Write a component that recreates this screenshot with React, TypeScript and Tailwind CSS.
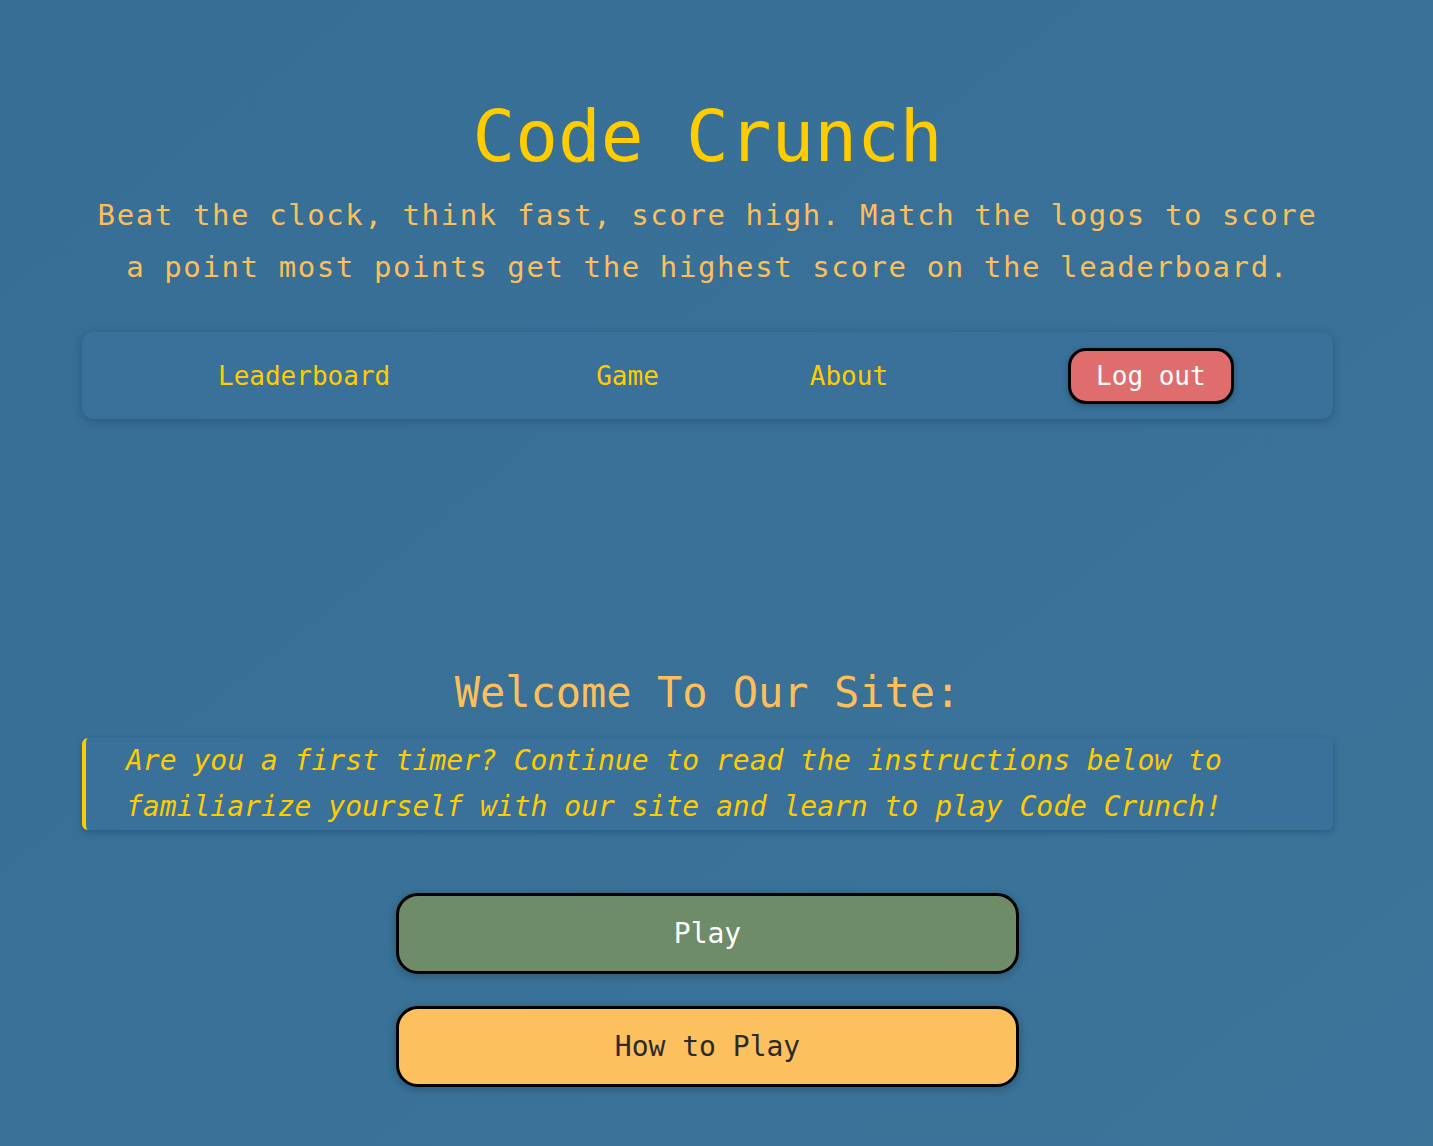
const mono = { fontFamily: '"DejaVu Sans Mono", "Liberation Mono", monospace' };

function NavLink({ children, className }: { children: React.ReactNode; className?: string }) {
  return (
    <a href="#" className={"text-[26px] leading-[32px] text-[#ffcc00] " + (className ?? "")}>
      {children}
    </a>
  );
}

export default function App() {
  return (
    <div
      style={mono}
      className="min-h-[1146px] w-full bg-gradient-to-br from-[#366e96] to-[#3b7399] pb-[60px] pl-[82px] pr-[100px]"
    >
      <header className="flex flex-col items-center text-center">
        <h1 className="mt-[95px] text-[71px] leading-[84px] text-[#ffcc00]">Code Crunch</h1>
        <p className="mt-[10px] text-[29px] leading-[52px] tracking-[1.6px] text-[#fcbf5b]">
          Beat the clock, think fast, score high. Match the logos to score
          <br />
          a point most points get the highest score on the leaderboard.
        </p>
      </header>

      <nav className="mt-[39px] flex h-[87px] items-center rounded-xl bg-[#39719a] pl-[136px] shadow-[0_2px_8px_rgba(20,50,80,0.35)]">
        <NavLink>Leaderboard</NavLink>
        <NavLink className="ml-[206px]">Game</NavLink>
        <NavLink className="ml-[151px]">About</NavLink>
        <button className="ml-[180px] rounded-[18px] border-[3px] border-black bg-[#e06d6d] px-[25px] py-[9px] text-[26px] leading-[32px] text-white shadow-[0_2px_6px_rgba(0,0,0,0.25)]">
          Log out
        </button>
      </nav>

      <section className="mt-[249px] flex flex-col items-center">
        <h2 className="text-[42px] leading-[50px] text-[#fcbf5b]">Welcome To Our Site:</h2>
        <blockquote className="mt-[20px] w-full rounded-md border-l-4 border-[#ffcc00] bg-[#39719a] pl-[40px] text-[28px] italic leading-[46px] text-[#ffcc00] shadow-[0_2px_6px_rgba(20,50,80,0.35)]">
          Are you a first timer? Continue to read the instructions below to
          <br />
          familiarize yourself with our site and learn to play Code Crunch!
        </blockquote>

        <div className="mt-[63px] flex w-[623px] flex-col gap-[32px]">
          <button className="h-[81px] rounded-[22px] border-[3px] border-black bg-[#6e8c68] text-[28px] text-white shadow-[0_2px_8px_rgba(0,0,0,0.25)]">
            Play
          </button>
          <button className="h-[81px] rounded-[22px] border-[3px] border-black bg-[#fdc05e] text-[28px] text-[#2b2b2b] shadow-[0_2px_8px_rgba(0,0,0,0.25)]">
            How to Play
          </button>
        </div>
      </section>
    </div>
  );
}
